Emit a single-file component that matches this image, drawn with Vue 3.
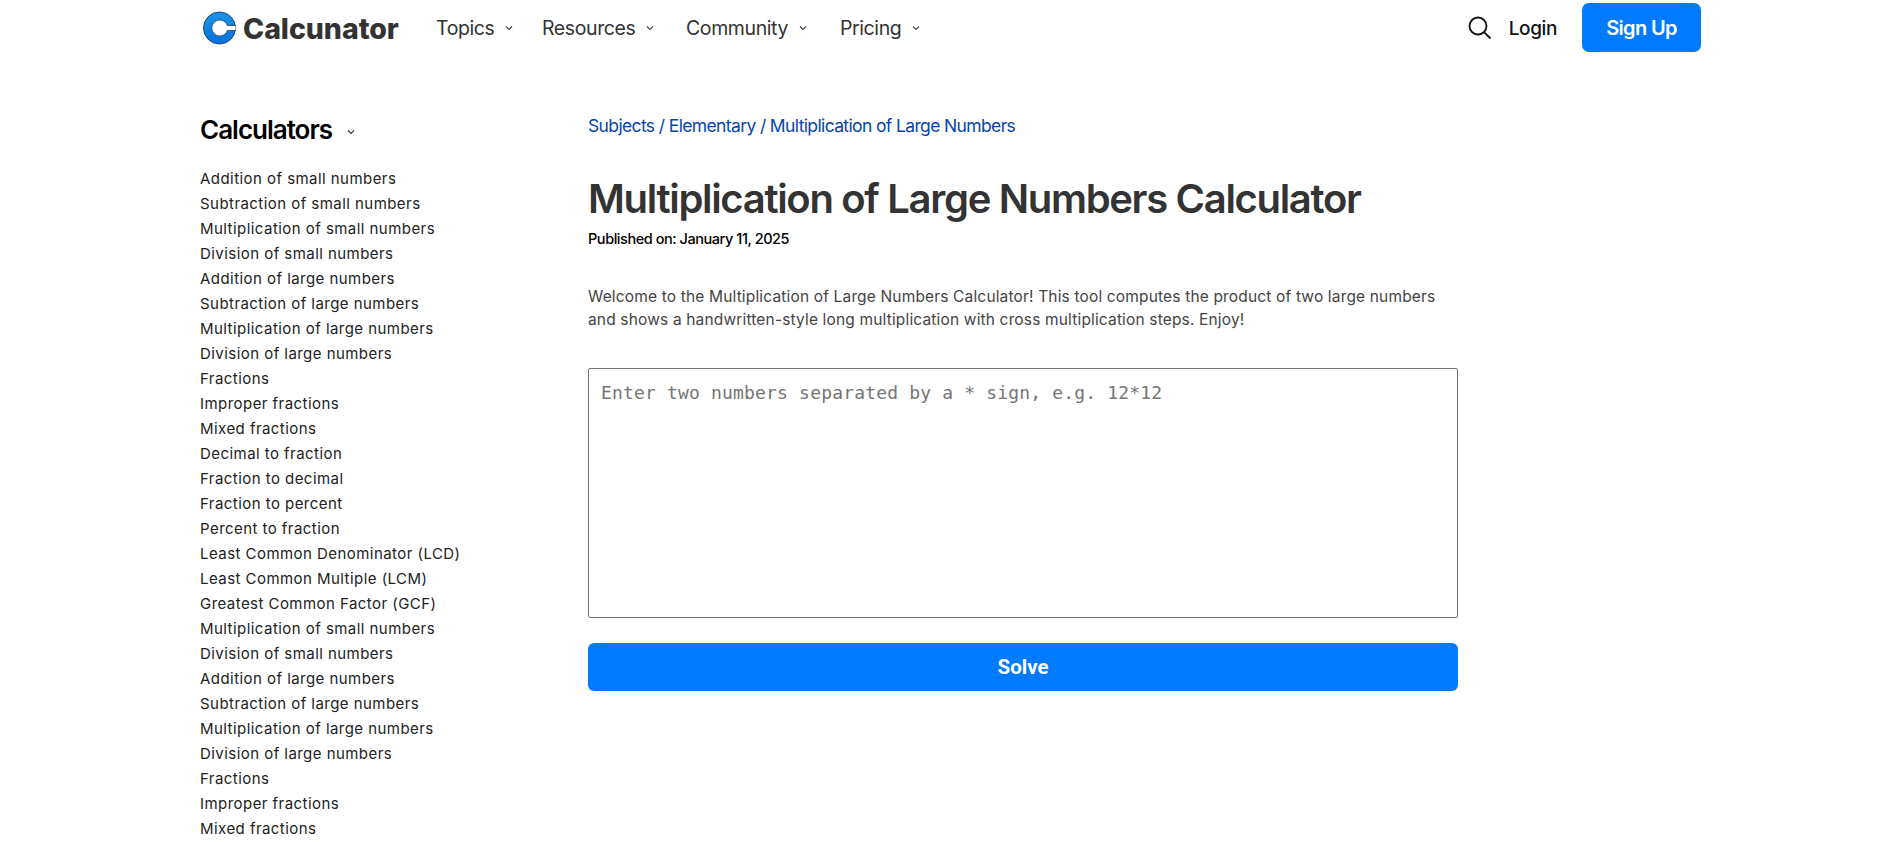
<script setup>
const nav = ['Topics', 'Resources', 'Community', 'Pricing']
const items = ['Addition of small numbers','Subtraction of small numbers','Multiplication of small numbers','Division of small numbers','Addition of large numbers','Subtraction of large numbers','Multiplication of large numbers','Division of large numbers','Fractions','Improper fractions','Mixed fractions','Decimal to fraction','Fraction to decimal','Fraction to percent','Percent to fraction','Least Common Denominator (LCD)','Least Common Multiple (LCM)','Greatest Common Factor (GCF)','Multiplication of small numbers','Division of small numbers','Addition of large numbers','Subtraction of large numbers','Multiplication of large numbers','Division of large numbers','Fractions','Improper fractions','Mixed fractions']
</script>

<template>
  <div class="page">
    <header class="header">
      <div class="logo">
        <svg width="33" height="34" viewBox="0 0 33 34">
          <defs>
            <linearGradient id="lg" x1="0" y1="0" x2="0" y2="1">
              <stop offset="0" stop-color="#1a96e8" />
              <stop offset="1" stop-color="#0a6fe0" />
            </linearGradient>
          </defs>
          <circle cx="16.500" cy="17" r="16" fill="url(#lg)" stroke="#1b4a7c" stroke-width="1" />
          <path d="M24.400 14.500A8 8 0 1 0 24.400 19.500H33V14.500Z" fill="#fff" stroke="#1b3a5c" stroke-width="0.800" />
        </svg>
        <span class="logo-text">Calcunator</span>
      </div>
      <nav class="nav">
        <a v-for="n in nav" :key="n" class="nav-item">
          <span>{{ n }}</span>
          <svg class="chev" width="8" height="6" viewBox="0 0 8 6"><path d="M1 1.500 4 4.500 7 1.500" fill="none" stroke="#444" stroke-width="1.100" /></svg>
        </a>
      </nav>
      <div class="right">
        <svg width="24" height="24" viewBox="0 0 24 24"><circle cx="10" cy="10" r="8.500" fill="none" stroke="#111" stroke-width="1.800" /><path d="M16.300 16.300l6.200 6.200" stroke="#111" stroke-width="1.800" /></svg>
        <a class="login">Login</a>
        <button class="signup">Sign Up</button>
      </div>
    </header>

    <div class="body">
      <aside class="side">
        <div class="side-head">
          <h2>Calculators</h2>
          <svg width="8" height="6" viewBox="0 0 8 6"><path d="M1 1.500 4 4.500 7 1.500" fill="none" stroke="#333" stroke-width="1.100" /></svg>
        </div>
        <ul>
          <li v-for="(it, i) in items" :key="i">{{ it }}</li>
        </ul>
      </aside>
      <main class="main">
        <div class="crumb">Subjects / Elementary / Multiplication of Large Numbers</div>
        <h1>Multiplication of Large Numbers Calculator</h1>
        <div class="pub">Published on: January 11, 2025</div>
        <p class="intro">Welcome to the Multiplication of Large Numbers Calculator! This tool computes the product of two large numbers<br />and shows a handwritten-style long multiplication with cross multiplication steps. Enjoy!</p>
        <textarea class="box" placeholder="Enter two numbers separated by a * sign, e.g. 12*12"></textarea>
        <button class="solve">Solve</button>
      </main>
    </div>
  </div>
</template>

<style>
html, body { margin: 0; background: #fff; overflow: hidden; }
</style>

<style scoped>
.page { height: 842px; overflow: hidden; font-family: Inter, "Liberation Sans", sans-serif; color: #333; }
.header { display: flex; align-items: center; height: 56px; padding: 0 192px 0 203px; }
.logo { display: flex; align-items: center; gap: 7px; width: 233px; flex: none; }
.logo-text { font: 800 28.500px Inter, sans-serif; color: #333; letter-spacing: -0.050px; }
.nav { display: grid; grid-template-columns: 106px 144px 154px auto; }
.nav-item { display: flex; align-items: center; gap: 11px; font-size: 19.500px; color: #333; letter-spacing: -0.400px; }
.right { margin-left: auto; display: flex; align-items: center; }
.login { margin-left: 17px; font-size: 19px; font-weight: 500; color: #111; letter-spacing: -0.400px; }
.signup { margin-left: 25px; width: 119px; height: 49px; margin-top: -1px; border: 0; border-radius: 7px; background: #007bff; color: #fff; font: 600 20px Inter, sans-serif; letter-spacing: -0.650px; }
.body { display: flex; padding: 0 0 0 200px; }
.side { width: 388px; flex: none; }
.side-head { display: flex; align-items: center; gap: 15px; margin-top: 56px; height: 36px; }
.side-head h2 { margin: 0; font-size: 26px; line-height: 36px; font-weight: 600; color: #000; letter-spacing: -1px; }
.side-head svg { margin-top: 4px; }
ul { list-style: none; margin: 18px 0 0; padding: 0; }
li { height: 25px; line-height: 25px; font-size: 15px; color: #222; letter-spacing: 0.450px; white-space: nowrap; }
.main { width: 870px; flex: none; }
.crumb { margin-top: 57px; font-size: 17.500px; line-height: 26px; color: #0645ad; letter-spacing: -0.630px; }
h1 { margin: 36px 0 0; font-size: 40px; line-height: 48px; font-weight: 600; color: #333; letter-spacing: -1.320px; white-space: nowrap; }
.pub { margin-top: 5px; font-size: 14.500px; line-height: 22px; font-weight: 500; color: #000; letter-spacing: -0.450px; }
.intro { margin: 35px 0 0; font-size: 15.500px; line-height: 23px; color: #444; letter-spacing: 0.160px; white-space: nowrap; }
.box { display: block; box-sizing: border-box; width: 870px; height: 250px; margin: 37px 0 0; padding: 12px; border: 1px solid #767676; border-radius: 2px; resize: none; outline: 0; font: 18px/24px "DejaVu Sans Mono", monospace; letter-spacing: 0.170px; }
.box::placeholder { color: #757575; opacity: 1; }
.solve { display: block; width: 870px; height: 48px; margin-top: 25px; border: 0; border-radius: 6px; background: #007bff; color: #fff; font: 700 20.500px Roboto, sans-serif; }
</style>
